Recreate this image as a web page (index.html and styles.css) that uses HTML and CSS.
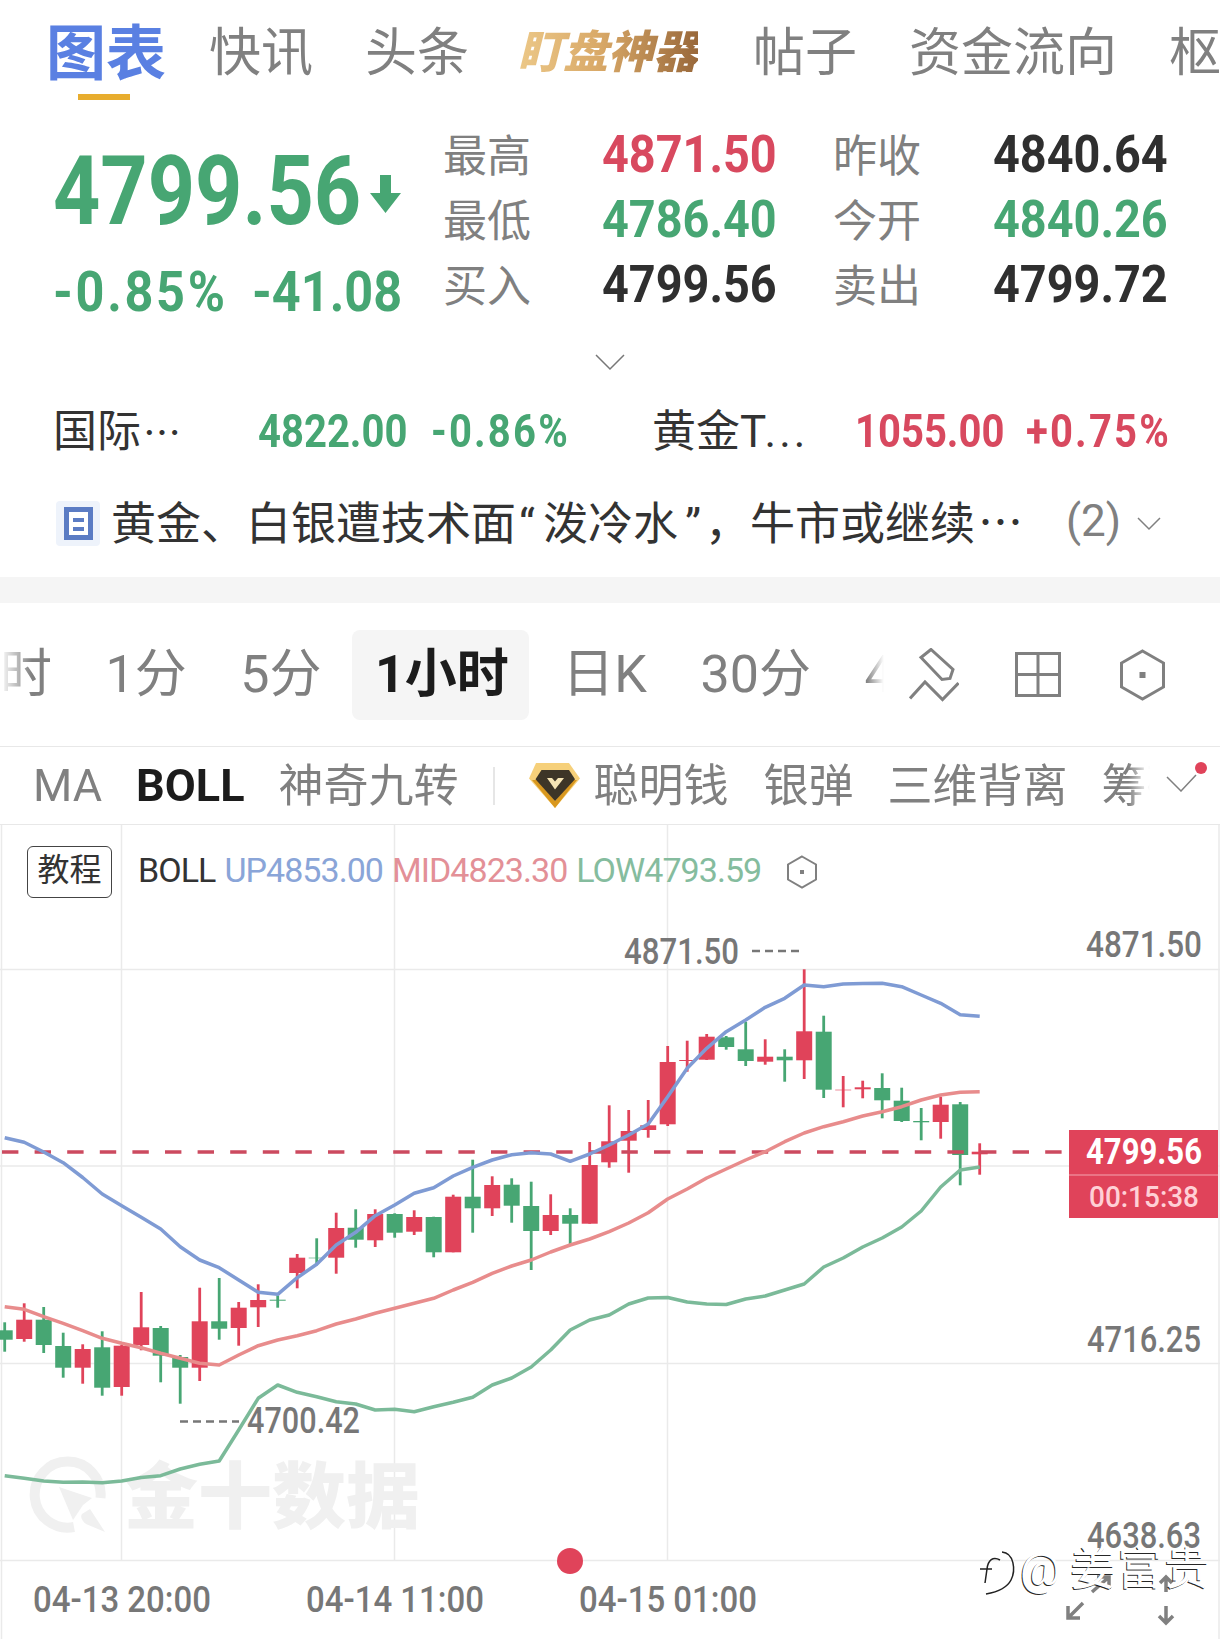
FILE: index.html
```html
<!DOCTYPE html>
<html lang="zh-CN">
<head>
    <meta charset="UTF-8">
    <meta name="viewport" content="width=device-width, initial-scale=1.0">
    <title>图表</title>
    <link rel="stylesheet" href="styles.css">
</head>
<body>

    <nav class="tabs">
        <a class="tab active">图表</a>
        <a class="tab">快讯</a>
        <a class="tab">头条</a>
        <a class="tab gold">盯盘神器</a>
        <a class="tab">帖子</a>
        <a class="tab">资金流向</a>
        <a class="tab">枢轴</a>
    </nav>

    <section class="quote">
        <div class="price-box">
            <div class="price-line">
                <span class="big-wrap"><span class="num big green">4799.56</span></span>
                <svg class="down-arrow" viewBox="0 0 31 38"><path d="M10 0h11v18h10L15.500 38 0 18h10z"/></svg>
            </div>
            <div class="change-line">
                <span class="change-pct"><span class="num change wide green">-0.85%</span></span>
                <span class="num change green">-41.08</span>
            </div>
        </div>
        <div class="stats">
            <span class="label">最高</span><span class="num stat red">4871.50</span>
            <span class="label">昨收</span><span class="num stat dark">4840.64</span>
            <span class="label">最低</span><span class="num stat green">4786.40</span>
            <span class="label">今开</span><span class="num stat green">4840.26</span>
            <span class="label">买入</span><span class="num stat dark">4799.56</span>
            <span class="label">卖出</span><span class="num stat dark">4799.72</span>
        </div>
    </section>

    <div class="more">
        <svg class="chevron-lg" viewBox="0 0 30 17"><path d="M1 1l14 14L29 1"/></svg>
    </div>

    <div class="related">
        <span class="rel-name">国际<span class="dots">…</span></span>
        <span class="num rel green">4822.00</span>
        <span class="num rel rel-chg green">-0.86%</span>
        <span class="rel-name">黄金<span class="trunc">T...</span></span>
        <span class="num rel red">1055.00</span>
        <span class="num rel rel-chg red">+0.75%</span>
    </div>

    <div class="news">
        <span class="doc-icon"><span class="doc-inner"></span></span>
        <span class="news-title">黄金、白银遭技术面<span class="open-q">“</span>泼冷水<span class="close-q">”</span>，牛市或继续<span class="dots">…</span></span>
        <span class="news-count">(2)</span>
        <svg class="chevron-sm" viewBox="0 0 24 14"><path d="M1 1l11 11L23 1"/></svg>
    </div>

    <div class="gap-bar"></div>

    <div class="period-row">
        <div class="periods">
            <span>时</span>
            <span>1分</span>
            <span>5分</span>
            <span class="period-on">1小时</span>
            <span>日K</span>
            <span>30分</span>
            <span>4小时</span>
        </div>
        <div class="tools">
            <svg class="tool-draw" viewBox="0 0 50 54"><path d="M22 1.500L12 9.500l21 22 8-1 3-9zM1 50.500l15-16.500 17.500 17.500L49.500 35"/></svg>
            <svg class="tool-grid" viewBox="0 0 46 45"><path d="M1.500 1.500h43v42h-43zM23 1.500v42M1.500 22.500h43"/></svg>
            <svg class="tool-hex" viewBox="0 0 45 52"><path d="M22.500 2L43.500 14v24L22.500 50 1.500 38V14z"/><rect class="hex-dot" x="19.500" y="23" width="6" height="6"/></svg>
        </div>
    </div>

    <div class="indicator-row">
        <div class="indicators">
            <span>MA</span>
            <span class="ind-on">BOLL</span>
            <span class="ind-cn">神奇九转</span>
            <i class="ind-sep"></i>
            <svg class="gem" viewBox="0 0 51 45">
                <path fill="#f6d07a" d="M7 0h33l11 15.500L26 45 0 15.500z"/>
                <path fill="#d9981f" d="M3 17l23 28 22-28-5 0-17 21-17-21z"/>
                <path fill="#3d3527" d="M12.500 7H40l6 9.300L26 38 6.500 16.300z"/>
                <path fill="#f5e4b4" d="M18 15l5 0 3 3.500 3-3.500 6 0-9 11.500z"/>
            </svg>
            <span class="ind-cn gem-text">聪明钱</span>
            <span class="ind-cn">银弹</span>
            <span class="ind-cn">三维背离</span>
            <span class="ind-cn">筹码分布</span>
        </div>
        <svg class="ind-more" viewBox="0 0 42 30">
            <path class="ind-chevron" d="M1 15l14 14L30 13"/>
            <circle cx="35" cy="6" r="6" fill="#e0435a"/>
        </svg>
    </div>

    <div class="chart">
        <div class="chart-head">
            <span class="tutorial">教程</span>
            <span class="legend">
                <span>BOLL</span>
                <span class="leg-up">UP4853.00</span>
                <span class="leg-mid">MID4823.30</span>
                <span class="leg-low">LOW4793.59</span>
            </span>
            <svg class="legend-hex" viewBox="0 0 32 34"><path d="M16 1.500L30 9.500v15L16 32.500 2 24.500v-15z"/><rect class="hex-dot" x="14" y="15" width="4" height="4"/></svg>
        </div>

        <!-- viewBox uses page coordinates so the chart numbers read straight off the screenshot -->
        <svg class="plot" viewBox="0 825 1220 814">
            <g class="grid-lines">
                <path d="M0 969.500H1220M0 1166H1220M0 1363.500H1220M0 1560.500H1220"/>
                <path d="M121.500 825V1560M394.500 825V1560M667.500 825V1560"/>
                <path d="M1.500 825V1639M1219 825V1639"/>
            </g>

            <g class="logo-mark">
                <path class="logo-ring" d="M74 1527A33 33 0 1 1 100.500 1498"/>
                <path class="logo-rocket" d="M59 1487l33 11-9 7-10 15z"/>
                <path class="logo-rocket" d="M90 1509l15 23-19-8c-4-3-6-7-4-10z"/>
                <text class="logo-text" x="124" y="1522" textLength="296" lengthAdjust="spacingAndGlyphs">金十数据</text>
            </g>

            <g id="candles"></g>
            <path class="price-line-dash" d="M2 1152H1069"/>
            <g id="bands"></g>

            <path class="marker-dash" d="M752 951H800"/>
            <path class="marker-dash" d="M180 1421.500H239"/>

            <text class="axis" x="624" y="964" textLength="115" lengthAdjust="spacingAndGlyphs">4871.50</text>
            <text class="axis" x="247" y="1433" textLength="113" lengthAdjust="spacingAndGlyphs">4700.42</text>
            <text class="axis" x="1086" y="957" textLength="116" lengthAdjust="spacingAndGlyphs">4871.50</text>
            <text class="axis" x="1087" y="1352" textLength="114" lengthAdjust="spacingAndGlyphs">4716.25</text>
            <text class="axis" x="1087" y="1548" textLength="114" lengthAdjust="spacingAndGlyphs">4638.63</text>

            <rect class="price-tag" x="1069" y="1130" width="149" height="88"/>
            <path class="price-tag-line" d="M1069 1175H1218"/>
            <text class="tag-price" x="1086" y="1164" textLength="116" lengthAdjust="spacingAndGlyphs">4799.56</text>
            <text class="tag-time" x="1089" y="1207" textLength="110" lengthAdjust="spacingAndGlyphs">00:15:38</text>

            <circle cx="570" cy="1561" r="13" fill="#e0435a"/>

            <text class="axis" x="33" y="1612" textLength="178" lengthAdjust="spacingAndGlyphs">04-13 20:00</text>
            <text class="axis" x="306" y="1612" textLength="178" lengthAdjust="spacingAndGlyphs">04-14 11:00</text>
            <text class="axis" x="579" y="1612" textLength="178" lengthAdjust="spacingAndGlyphs">04-15 01:00</text>

            <g class="zoom-arrows">
                <path d="M1083 1603l-15 15M1068 1606v12h12"/>
                <path d="M1092 1592l17-15M1097 1577h12v12"/>
                <path d="M1166 1606v17M1159 1616l7 7 7-7"/>
                <path d="M1166 1592v-15M1160 1583l6-6 6 6"/>
            </g>

            <g class="weibo-mark">
                <path d="M1000 1560c-7-4-12 0-13 9l-2 14M980 1569h12M1002 1552c12 1 14 18 9 28-4 8-14 12-25 14"/>
            </g>
        </svg>

        <span class="watermark">@<span class="watermark-name">姜富贵</span></span>
    </div>

    <script src="chart.js"></script>
</body>
</html>
```

FILE: styles.css
```css
* {
    box-sizing: border-box;
}

body {
    margin: 0;
    width: 1220px;
    height: 1639px;
    overflow: hidden;
    background-color: #fff;
    color: #333;
    font-family: Roboto, "Noto Sans CJK SC", sans-serif;
    font-size: 44px;
}

.green { color: #47a673; }
.red { color: #d8495f; }
.dark { color: #2f2f2f; }

/* numbers in the app are a narrow DIN face, Roboto squeezed is the closest we have */
.num {
    display: inline-block;
    font-weight: 700;
    white-space: nowrap;
    transform-origin: left center;
}

.dots {
    font-family: "Noto Sans CJK SC", sans-serif;
}

/* top tabs */
.tabs {
    display: flex;
    align-items: center;
    gap: 52px;
    height: 104px;
    margin-bottom: 18px;
    padding: 0 0 8px 46px;
    overflow: hidden;
    font-size: 52px;
    color: #808080;
    white-space: nowrap;
}

.tab {
    position: relative;
    flex: none;
}

.tab.active {
    margin-right: -9px;
    font-size: 60px;
    font-weight: 700;
    color: #5a80e2;
}

.tab.active::after {
    content: "";
    position: absolute;
    left: 32px;
    bottom: -8px;
    width: 52px;
    height: 6px;
    background-color: #e8ad2e;
}

.tab.gold {
    margin: 0 3px 0 -3px;
    font-size: 45px;
    font-weight: 900;
    font-style: italic;
    background: linear-gradient(90deg, #ecc888, #d9a968 45%, #99683a);
    -webkit-background-clip: text;
    background-clip: text;
    color: transparent;
}

/* price block */
.quote {
    display: flex;
    height: 198px;
    padding-left: 53px;
}

.price-box {
    width: 390px;
    padding-top: 21px;
}

.price-line {
    display: flex;
    align-items: center;
    height: 96px;
}

.big-wrap {
    width: 317px;
}

.big {
    font-size: 96px;
    line-height: 96px;
    transform: scaleX(.86);
}

.down-arrow {
    width: 31px;
    height: 38px;
    margin-top: 6px;
    fill: #47a673;
}

.change-line {
    display: flex;
    margin-top: 25px;
}

.change-pct {
    width: 199px;
}

.change {
    font-size: 56px;
    line-height: 56px;
    transform: scaleX(.9);
}

.change.wide {
    letter-spacing: 3px;
}

.stats {
    display: grid;
    grid-template-columns: 159px 231px 160px auto;
    grid-auto-rows: 65px;
    align-items: center;
    flex: 1;
}

.label {
    padding-bottom: 4px;
    color: #808080;
}

.stat {
    font-size: 52px;
    transform: scaleX(.9);
}

.more {
    display: flex;
    justify-content: center;
    align-items: center;
    height: 84px;
}

.chevron-lg {
    width: 30px;
    height: 17px;
    fill: none;
    stroke: #777;
    stroke-width: 1.500;
}

.related {
    display: grid;
    grid-template-columns: 205px 173px 221px 203px 171px auto;
    align-items: center;
    height: 52px;
    margin-top: -8px;
    padding-left: 53px;
}

.rel-name {
    padding-bottom: 6px;
    white-space: nowrap;
}

.rel-name .dots {
    margin-left: 2px;
    font-size: 38px;
}

.rel {
    font-size: 46px;
    transform: scaleX(.87);
}

.rel-chg {
    letter-spacing: 2.500px;
}

.trunc {
    letter-spacing: 3px;
}

.news {
    display: flex;
    align-items: center;
    height: 107px;
    margin-top: 22px;
    padding-left: 56px;
}

.doc-icon {
    display: flex;
    justify-content: center;
    align-items: center;
    width: 44px;
    height: 45px;
    margin-right: 11px;
    border-radius: 4px;
    background-color: #eef3fb;
}

.doc-inner {
    width: 29px;
    height: 33px;
    border: 5px solid #5b7cc4;
    background:
        linear-gradient(#5b7cc4, #5b7cc4) 4px 6px / 11px 4px no-repeat,
        linear-gradient(#5b7cc4, #5b7cc4) 4px 15px / 11px 4px no-repeat,
        #fff;
}

.news-title {
    width: 955px;
    padding-bottom: 6px;
    font-size: 45px;
    white-space: nowrap;
}

.news-title .dots {
    margin-left: 3px;
}

.open-q {
    margin-left: 3px;
    margin-right: 8px;
}

.close-q {
    margin-left: 7px;
    margin-right: 4px;
}

.news-count {
    width: 71px;
    padding-bottom: 6px;
    color: #808080;
}

.chevron-sm {
    width: 24px;
    height: 14px;
    fill: none;
    stroke: #808080;
    stroke-width: 1.500;
}

.gap-bar {
    height: 26px;
    background-color: #f5f5f5;
}

/* period tabs */
.period-row {
    display: flex;
    align-items: center;
    height: 144px;
    border-bottom: 1px solid #e8e8e8;
}

.periods {
    display: flex;
    align-items: center;
    gap: 53.500px;
    width: 885px;
    overflow: hidden;
    flex: none;
    font-size: 52px;
    line-height: 90px;
    color: #808080;
    white-space: nowrap;
    -webkit-mask-image: linear-gradient(90deg, transparent 0, #000 32px, #000 866px, transparent 884px);
    mask-image: linear-gradient(90deg, transparent 0, #000 32px, #000 866px, transparent 884px);
}

.period-on {
    margin: 0 -20px 0 -23px;
    padding: 0 20px 0 23px;
    border-radius: 8px;
    background-color: #f5f5f5;
    color: #1c1c1c;
    font-weight: 700;
}

.tools {
    display: flex;
    align-items: center;
    margin-left: 24px;
}

.tools svg {
    fill: none;
    stroke: #808080;
    stroke-width: 3;
}

.tool-draw {
    width: 50px;
    height: 54px;
    margin-right: 56px;
}

.tool-grid {
    width: 46px;
    height: 45px;
    margin-right: 59px;
}

.tool-hex {
    width: 45px;
    height: 52px;
}

.hex-dot {
    fill: #808080;
    stroke: none;
}

/* indicator tabs */
.indicator-row {
    display: flex;
    align-items: center;
    height: 78px;
    border-bottom: 1px solid #e8e8e8;
}

.indicators {
    display: flex;
    align-items: center;
    gap: 34px;
    width: 1166px;
    padding-left: 33px;
    overflow: hidden;
    flex: none;
    font-size: 45px;
    color: #808080;
    white-space: nowrap;
    -webkit-mask-image: linear-gradient(90deg, #000 1128px, transparent 1150px);
    mask-image: linear-gradient(90deg, #000 1128px, transparent 1150px);
}

.ind-cn {
    padding-bottom: 6px;
}

.ind-on {
    color: #1c1c1c;
    font-weight: 700;
}

.ind-sep {
    flex: none;
    width: 2px;
    height: 38px;
    background-color: #e6e6e6;
}

.gem {
    flex: none;
    width: 51px;
    height: 45px;
}

.gem-text {
    margin: 0 1px 0 -20px;
}

.ind-more {
    width: 42px;
    height: 30px;
    margin-top: -18px;
}

.ind-chevron {
    fill: none;
    stroke: #808080;
    stroke-width: 1.500;
}

/* chart canvas */
.chart {
    position: relative;
    height: 814px;
}

.plot {
    position: absolute;
    top: 0;
    left: 0;
    width: 1220px;
    height: 814px;
}

.chart-head {
    position: relative;
    z-index: 1;
    display: flex;
    align-items: center;
    height: 73px;
    padding: 21px 0 0 27px;
}

.tutorial {
    width: 85px;
    height: 52px;
    margin-right: 26px;
    border: 1px solid #444;
    border-radius: 6px;
    font-size: 32px;
    line-height: 46px;
    text-align: center;
}

.legend {
    display: flex;
    gap: 9px;
    width: 648px;
    padding-bottom: 4px;
    font-size: 34px;
    letter-spacing: -.950px;
    white-space: nowrap;
}

.leg-up { color: #8aa5d8; }
.leg-mid { color: #e39097; }
.leg-low { color: #85bc9e; }

.legend-hex {
    width: 32px;
    height: 34px;
    fill: none;
    stroke: #808080;
    stroke-width: 2;
}

.grid-lines path {
    fill: none;
    stroke: #eaeaea;
    stroke-width: 1.500;
}

.logo-ring {
    fill: none;
    stroke: #f0f0f0;
    stroke-width: 10;
}

.logo-rocket {
    fill: #f0f0f0;
}

.logo-text {
    fill: #f0f0f0;
    font-size: 72px;
    font-weight: 900;
    font-family: "Noto Sans CJK SC", sans-serif;
}

.price-line-dash {
    fill: none;
    stroke: #cc4a5f;
    stroke-width: 3.500;
    stroke-dasharray: 16.400 16.200;
}

.marker-dash {
    fill: none;
    stroke: #777;
    stroke-width: 2.500;
    stroke-dasharray: 8 5;
}

.axis {
    fill: #777;
    font-size: 36px;
    font-weight: 500;
}

.price-tag {
    fill: #e0435a;
}

.price-tag-line {
    stroke: #f4a6b0;
    stroke-width: 1;
}

.tag-price {
    fill: #fff;
    font-size: 36px;
    font-weight: 700;
}

.tag-time {
    fill: #ffd0d6;
    font-size: 30px;
    font-weight: 500;
}

.zoom-arrows path {
    fill: none;
    stroke: #808080;
    stroke-width: 3.500;
}

.weibo-mark path {
    fill: none;
    stroke: #222;
    stroke-width: 1.500;
}

.watermark {
    position: absolute;
    left: 1020px;
    top: 714px;
    color: #fff;
    font-size: 45px;
    line-height: 62px;
    text-shadow: -1px 1px 0 rgba(0, 0, 0, .85);
    white-space: nowrap;
}

.watermark-name {
    margin-left: 10px;
    letter-spacing: 2px;
}
```

FILE: chart.js
```js
// Candles and Bollinger bands, all y values are page pixels read off the screenshot
const START_X = 4.7;
const STEP = 19.5;
const BODY_W = 16;
const GREEN = '#47a673';
const RED = '#e0435a';

// [colour, wick top, wick bottom, body top, body bottom]
const candles = [
    ['g', 1322.3, 1351.7, 1330.3, 1339.7], ['r', 1303.3, 1341.7, 1319.7, 1339],
    ['g', 1307, 1353, 1319.7, 1345], ['g', 1332.7, 1377.7, 1346, 1367.7],
    ['r', 1344.3, 1383.7, 1349, 1367.7], ['g', 1331.3, 1395.7, 1347.3, 1387.7],
    ['r', 1345, 1395.7, 1345.7, 1387], ['r', 1292, 1350.3, 1327.3, 1345],
    ['g', 1326, 1382.3, 1328, 1355.7], ['g', 1355, 1403.7, 1357, 1367.7],
    ['r', 1287.7, 1381, 1321.3, 1367.7], ['g', 1278, 1339.7, 1321.3, 1328.7],
    ['r', 1302, 1345.7, 1307.7, 1328], ['r', 1284.3, 1327, 1300, 1307.3],
    ['g', 1295.3, 1307.7, 1299.7, 1300.7], ['r', 1254, 1288.3, 1257.7, 1273],
    ['g', 1238.3, 1265.3, 1257.7, 1258.3], ['r', 1212.7, 1273.7, 1228, 1257.7],
    ['g', 1209.3, 1247.7, 1227.7, 1239.7], ['r', 1209.3, 1247, 1214, 1240.3],
    ['g', 1213.3, 1237.7, 1214, 1232.7], ['r', 1210.3, 1235, 1217, 1231.7],
    ['g', 1216.7, 1257.3, 1217, 1252.3], ['r', 1194.7, 1252.3, 1196.7, 1252.3],
    ['g', 1159.7, 1232.7, 1196.7, 1208.3], ['r', 1176.3, 1216, 1185, 1208.3],
    ['g', 1178.3, 1222.7, 1184.7, 1205.7], ['g', 1181.7, 1270, 1206, 1231],
    ['r', 1194.3, 1235, 1215, 1231], ['g', 1208.3, 1245, 1215, 1223.7],
    ['r', 1142, 1223.7, 1165, 1223.7], ['r', 1105.3, 1167.7, 1141.3, 1162.3],
    ['r', 1110, 1172.7, 1131, 1140.7], ['r', 1100, 1137.7, 1125.3, 1130],
    ['r', 1046, 1126, 1062, 1124.3], ['r', 1040.7, 1071.7, 1060, 1061],
    ['r', 1034, 1060, 1036.7, 1059.7], ['g', 1036, 1049.7, 1037.3, 1047],
    ['g', 1021.7, 1066, 1049.3, 1061], ['r', 1039.3, 1064.7, 1056.7, 1061.7],
    ['g', 1049.3, 1081.7, 1056.7, 1060.3], ['r', 969.3, 1079, 1031.3, 1060.3],
    ['g', 1015.7, 1098, 1031.7, 1089.7], ['r', 1076, 1107.3, 1089.7, 1090.3],
    ['r', 1080.7, 1098.3, 1087.3, 1089.3], ['g', 1073.3, 1118.3, 1088, 1100.3],
    ['g', 1087.7, 1122, 1100.7, 1121], ['g', 1108, 1140.3, 1121, 1122.3],
    ['r', 1096.7, 1138.7, 1104.7, 1122], ['g', 1102, 1185.3, 1104.3, 1155],
    ['r', 1143.3, 1174.7, 1151.7, 1154.3]
];

const bands = [
    {
        color: '#7f9bd4',
        points: [1137.7, 1142.3, 1152, 1162.7, 1177.5, 1194, 1205.7, 1217.3, 1229, 1246.7, 1260,
            1267.7, 1280, 1292.3, 1294.3, 1277.7, 1264.3, 1245, 1232.3, 1215.7, 1205, 1193.3,
            1187.7, 1176, 1167.3, 1160, 1154.7, 1152.7, 1154, 1161.3, 1154, 1145, 1135, 1124,
            1096.7, 1068.3, 1048.3, 1031.7, 1020, 1007.3, 998.3, 985, 986.7, 984, 983.5, 983.3,
            986.7, 995, 1003.3, 1014.7, 1016.3]
    },
    {
        color: '#e88c8c',
        points: [1306.7, 1309.3, 1316.7, 1323.3, 1330.7, 1338.3, 1343.3, 1347.7, 1353.3, 1358.3,
            1363.3, 1365, 1355, 1345.7, 1340, 1335.7, 1330.7, 1324, 1319, 1313.3, 1308.3, 1303.3,
            1298.3, 1290, 1282.3, 1273.3, 1266, 1260, 1252, 1245, 1239, 1231.7, 1223, 1212.7, 1199,
            1189, 1178, 1169, 1160, 1151.7, 1141.7, 1133, 1126.7, 1121.7, 1116, 1111.7, 1106.7,
            1100, 1095, 1092.3, 1091.7]
    },
    {
        color: '#7bba99',
        points: [1475.7, 1478.3, 1481, 1482.3, 1482, 1482.7, 1481, 1477.5, 1475.7, 1469, 1464.3,
            1461, 1430, 1398.3, 1385, 1392.3, 1396.7, 1401.7, 1404, 1410, 1409.3, 1411.7, 1406.7,
            1402.3, 1397.3, 1385, 1378, 1367, 1350, 1330, 1320, 1315, 1304, 1298, 1297.5, 1302,
            1304, 1304.5, 1299, 1296, 1290, 1284, 1267, 1258, 1247, 1238, 1227, 1211, 1187, 1170,
            1167]
    }
];

const SVG_NS = 'http://www.w3.org/2000/svg';

function svgEl(name, attrs) {
    const el = document.createElementNS(SVG_NS, name);
    Object.keys(attrs).forEach(key => el.setAttribute(key, attrs[key]));
    return el;
}

const candleGroup = document.getElementById('candles');
candles.forEach((c, i) => {
    const x = START_X + i * STEP;
    const color = c[0] === 'g' ? GREEN : RED;
    candleGroup.appendChild(svgEl('line', {
        x1: x, x2: x, y1: c[1], y2: c[2], stroke: color, 'stroke-width': 2.8
    }));
    candleGroup.appendChild(svgEl('rect', {
        x: x - BODY_W / 2, y: c[3], width: BODY_W, height: c[4] - c[3], fill: color
    }));
});

const bandGroup = document.getElementById('bands');
bands.forEach(band => {
    const pts = band.points.map((y, i) => `${START_X + i * STEP},${y}`).join(' ');
    bandGroup.appendChild(svgEl('polyline', {
        points: pts, fill: 'none', stroke: band.color, 'stroke-width': 3.5, 'stroke-linejoin': 'round'
    }));
});
```
